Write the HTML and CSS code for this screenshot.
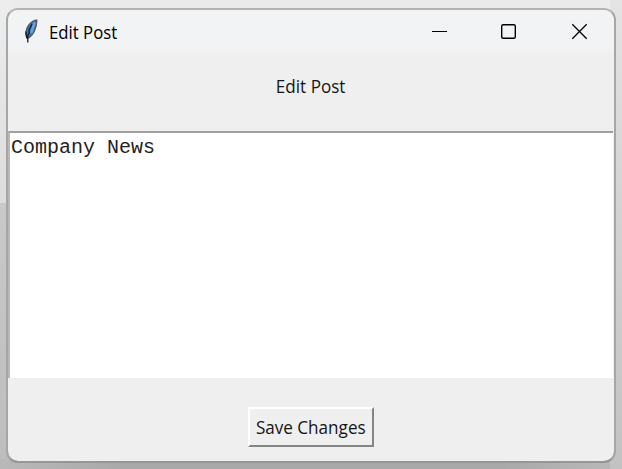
FILE: index.html
```html
<!DOCTYPE html>
<html lang="en">
<head>
<meta charset="utf-8">
<title>Edit Post</title>
<link rel="stylesheet" href="styles.css">
</head>
<body>
<main class="window">
  <header class="titlebar">
    <svg class="feather" width="16" height="26" viewBox="0 0 16 26">
      <path d="M13.8 1.2C8.5 1.5 3.2 7 2.8 14.5L4.3 19.5C10 17.5 13.8 9 13.8 1.2Z" fill="#3b78bd" stroke="#50575d" stroke-width="1.3"/>
      <path d="M12 3.5C10 6 9.6 10.5 8.2 14" fill="none" stroke="#69a3e0" stroke-width="2.4"/>
      <path d="M9 5L6.8 9.5L6 11L6.2 14L4.8 16.5V23.5M3 12.5L3.5 18L5 20" fill="none" stroke="#111a24" stroke-width="1.3"/>
    </svg>
    <span class="title">Edit Post</span>
    <svg class="controls" width="160" height="20" viewBox="0 0 160 20" fill="none" stroke="#000">
      <path d="M2 9.5H17" stroke-width="1.1"/>
      <rect x="71.7" y="2.7" width="13.6" height="13.6" rx="1.5" stroke-width="1.4"/>
      <path d="M142.3 2.3L156.7 16.7M156.7 2.3L142.3 16.7" stroke-width="1.3"/>
    </svg>
  </header>
  <div class="heading"><span class="label">Edit Post</span></div>
  <div class="editor">Company News</div>
  <footer class="actions"><button class="save"><span class="save-text">Save Changes</span></button></footer>
</main>
</body>
</html>
```
FILE: styles.css
```css
* { box-sizing: border-box; }
body {
  margin: 0;
  width: 622px;
  height: 469px;
  padding: 8px 6px 6px;
  overflow: hidden;
  background:
    linear-gradient(#e4e4e4, #d5d5d5 40%, #c2c2c2) right top / 12px 469px no-repeat,
    linear-gradient(90deg, #b9b9b9, #a9a9a9 20%, #a9a9a9 80%, #b9b9b9) left bottom / 622px 10px no-repeat,
    linear-gradient(#c9c9c9, #bdbdbd) left bottom / 12px 266px no-repeat,
    linear-gradient(#ededed, #dcdcdc) left top / 12px 203px no-repeat,
    #ebebeb;
  font-family: "Open Sans", "Noto Sans", sans-serif;
  color: #000;
}
.window {
  width: 610px;
  height: 455px;
  display: flex;
  flex-direction: column;
  border: 2px solid;
  border-color: #b4b4b4 #a6a6a6 #969696;
  border-radius: 12px;
  background: #efefef;
  background-clip: padding-box;
  overflow: hidden;
}
.titlebar {
  height: 44px;
  display: flex;
  align-items: center;
  padding: 0 24px 0 15px;
  background: linear-gradient(#f1f3f5 80%, #f0f1f2);
}
.feather { margin-right: 10px; margin-top: -1px; }
.title {
  font-size: 18px;
  line-height: 24px;
  white-space: nowrap;
  transform: scaleX(.93);
  transform-origin: left;
}
.controls { margin-left: auto; }
.heading {
  height: 77px;
  display: flex;
  justify-content: center;
  padding-top: 20px;
}
.label, .save-text {
  display: inline-block;
  font-size: 18px;
  line-height: 24px;
  white-space: nowrap;
  transform: scaleX(.95);
  color: #151515;
}
.editor {
  height: 247px;
  margin-right: 1px;
  padding: 3px 1px;
  border-top: 2px solid #a0a0a0;
  border-left: 2px solid #b8b8b8;
  background: #fff;
  color: #222;
  font: 20px/24px "Courier New", "Liberation Mono", monospace;
}
.actions {
  flex: 1;
  display: flex;
  justify-content: center;
  padding-top: 29px;
}
.save {
  width: 126px;
  height: 40px;
  display: flex;
  align-items: center;
  justify-content: center;
  padding: 0;
  border: 2px solid;
  border-color: #fff #858585 #858585 #fff;
  background: #efefef;
  color: #000;
  font-family: inherit;
}
```
